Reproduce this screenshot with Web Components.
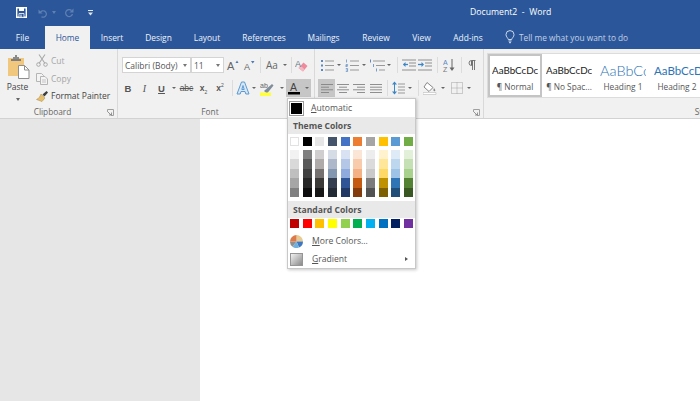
<!DOCTYPE html>
<html>
<head>
<meta charset="utf-8">
<title>Document2 - Word</title>
<style>
html,body{margin:0;padding:0;width:700px;height:401px;overflow:hidden;background:#fff}
</style>
</head>
<body>
<word-app></word-app>
<script>
const FONT = `"Open Sans","Noto Sans",sans-serif`

const ICONS = {
    save:`<svg width="11" height="11" viewBox="0 0 11 11"><path d="M.7 .7h9.600v9.600H.7z" fill="none" stroke="#fff" stroke-width="1.400"/><path d="M3 .7h5v3.300H3z" fill="#fff"/><path d="M3 6.500h5v3.800H3z" fill="#2b579a" stroke="#fff" stroke-width=".8"/><path d="M4.500 7.500h1v2.500h-1z" fill="#fff"/></svg>`,
    undo:`<svg width="10" height="10" viewBox="0 0 10 10"><path d="M2.300 4.500a3.200 3.200 0 1 1 1.200 4.200" fill="none" stroke="#5f80b3" stroke-width="1.200"/><path d="M.5 1.500v4h4z" fill="#5f80b3"/></svg>`,
    redo:`<svg width="10" height="10" viewBox="0 0 10 10"><path d="M7.500 2.500A3.500 3.500 0 1 0 8.500 6" fill="none" stroke="#5f80b3" stroke-width="1.200"/><path d="M9.500 .5v4h-4z" fill="#5f80b3"/></svg>`,
    custom:`<svg width="5" height="6" viewBox="0 0 5 6"><path d="M0 .5h5" stroke="#dfe7f3" stroke-width="1"/><path d="M0 2.500h5l-2.500 3z" fill="#dfe7f3"/></svg>`,
    bulb:`<svg width="10" height="14" viewBox="0 0 10 14"><path d="M3.300 9.500C3 7.800 1 7 1 4.600a4 4 0 0 1 8 0C9 7 7 7.800 6.700 9.500z" fill="none" stroke="#dbe4f1" stroke-width=".9"/><path d="M3.500 11h3M4 12.700h2" stroke="#dbe4f1"/></svg>`,
    paste:`<svg width="22" height="24" viewBox="0 0 22 24"><path d="M0 3h16v18H0z" fill="#f0c77d"/><path d="M5 2h2V0h2v2h2v3H5z" fill="#8a8a8a"/><path d="M3 4h10v2H3z" fill="#7d7d7d"/><path d="M10.500 10.500h6l4.500 4.500v8.500H10.500z" fill="#fff" stroke="#8f8f8f"/><path d="M16.500 10.500v4.500H21" fill="none" stroke="#8f8f8f"/></svg>`,
    cut:`<svg width="12" height="13" viewBox="0 0 12 13"><path d="M3 0.500l6 9M9 0.500l-6 9" stroke="#a9a9a9" stroke-width="1.100" fill="none"/><circle cx="2.500" cy="10.500" r="1.800" fill="none" stroke="#a9a9a9"/><circle cx="9.500" cy="10.500" r="1.800" fill="none" stroke="#a9a9a9"/></svg>`,
    copy:`<svg width="12" height="13" viewBox="0 0 12 13"><path d="M.5 1.500h5l2 2v6h-7z" fill="#f4f4f4" stroke="#b5b5b5"/><path d="M4.500 4.500h4.500l2.500 2.500v5.500h-7z" fill="#f4f4f4" stroke="#b5b5b5"/><path d="M6 8h4M6 10h4" stroke="#c4c4c4"/></svg>`,
    painter:`<svg width="13" height="12" viewBox="0 0 13 12"><path d="M5 4l4 4-3 3.500L.5 9.500C3 8.500 4 6.500 5 4z" fill="#e7be6c" stroke="#a98a4c" stroke-width=".5"/><path d="M6.500 4.500l2 2 3.500-4-1.500-1.500z" fill="#3d3d3d"/></svg>`,
    launcher:`<svg width="7" height="7" viewBox="0 0 7 7"><path d="M.5 3V.5H6.500V6.500H4" fill="none" stroke="#a0a0a0"/><path d="M1 3l3 3M4.500 3.500V6H2" fill="none" stroke="#7e7e7e" stroke-width=".8"/></svg>`,
    grow:`<svg width="14" height="16" viewBox="0 0 14 16"><text x="1" y="13" font-family="Liberation Sans" font-size="11" fill="#666">A</text><path d="M9.500 6l1.500-2.500L12.500 6z" fill="#4a7ab8"/></svg>`,
    shrink:`<svg width="13" height="16" viewBox="0 0 13 16"><text x="1" y="13" font-family="Liberation Sans" font-size="9" fill="#666">A</text><path d="M8 4h3.500L9.750 6.500z" fill="#4a7ab8"/></svg>`,
    eraser:`<svg width="14" height="15" viewBox="0 0 14 15"><path d="M3.500 10L8.500 4.500l4 3.500-4.500 5.500z" fill="#ee8a9c"/><path d="M3.500 10l2-2.300 4 3.500-1.500 2.300z" fill="#f4b8c2"/><text x="0" y="9" font-family="Liberation Sans" font-size="9" fill="#678">A</text></svg>`,
    bullets:`<svg width="14" height="13" viewBox="0 0 14 13"><path d="M1 1h2v2H1zM1 5.500h2v2H1zM1 10h2v2H1z" fill="#5b88c0"/><path d="M5 2h9M5 6.500h9M5 11h9" stroke="#999"/></svg>`,
    numbers:`<svg width="14" height="13" viewBox="0 0 14 13"><path d="M1.500 0.500v3M.8 5.500h1.800v1H.8v1h1.800M.8 9.500h1.800v3H.8M.8 11h1.800" stroke="#5b88c0" stroke-width=".7" fill="none"/><path d="M5 2h9M5 6.500h9M5 11h9" stroke="#999"/></svg>`,
    multi:`<svg width="16" height="13" viewBox="0 0 16 13"><path d="M1.500 0.500v3" stroke="#5b88c0"/><path d="M4.500 5v3M7.500 9.500v3" stroke="#5b88c0" stroke-width=".8"/><path d="M4 2h12M7 6.500h9M10 11h6" stroke="#999"/></svg>`,
    outdent:`<svg width="14" height="12" viewBox="0 0 14 12"><path d="M0 1h14M7 4h7M7 7h7M0 11h14" stroke="#8f8f8f"/><path d="M6 5.500H1.500" stroke="#3d86c6" stroke-width="1.300"/><path d="M3.500 3L1 5.500 3.500 8z" fill="#3d86c6"/></svg>`,
    indent:`<svg width="14" height="12" viewBox="0 0 14 12"><path d="M0 1h14M7 4h7M7 7h7M0 11h14" stroke="#8f8f8f"/><path d="M0 5.500h4.500" stroke="#3d86c6" stroke-width="1.300"/><path d="M3.500 3L6 5.500 3.500 8z" fill="#3d86c6"/></svg>`,
    sort:`<svg width="12" height="15" viewBox="0 0 12 15"><text x="0" y="6.500" font-family="Liberation Sans" font-size="7" fill="#5b88c0">A</text><text x="0" y="13.500" font-family="Liberation Sans" font-size="7" fill="#777">Z</text><path d="M9 1v10" stroke="#666"/><path d="M6.500 9.500L9 13l2.500-3.500z" fill="#666"/></svg>`,
    pilcrow:`<svg width="8" height="10" viewBox="0 0 8 10"><path d="M3.500 5.500a2.500 2.500 0 0 1 0-5H7.500M4.500 .5V10M6.500 .5V10" fill="none" stroke="#6c6c6c" stroke-width=".9"/><path d="M3 .5h1.500v5H3z" fill="#6c6c6c"/></svg>`,
    texteffect:`<svg width="14" height="14" viewBox="0 0 14 14"><path d="M5.500 1h3L13 13H9.800l-.8-2.500H5L4.200 13H1zM5.800 8.500h2.400L7 4.500z" fill="#d8e6f5" stroke="#5b9bd5" stroke-width="1" fill-rule="evenodd"/></svg>`,
    highlight:`<svg width="15" height="15" viewBox="0 0 15 15"><text x="0" y="7" font-family="Liberation Sans" font-size="7" fill="#666">ab</text><path d="M4 10l8-7 1.500 1.500-6.500 8z" fill="#7f8c99"/><path d="M0 11.500h11V15H0z" fill="#ffff3c"/></svg>`,
    fontcolor:`<svg width="14" height="15" viewBox="0 0 14 15"><text x="3" y="10" font-family="Liberation Sans" font-size="10.500" fill="#444">A</text><path d="M1 11h12v2.500H1z" fill="#000"/></svg>`,
    left:`<svg width="12" height="9" viewBox="0 0 12 9"><path d="M0 .5h12M0 3.200h8M0 5.800h12M0 8.500h8" stroke="#8a8a8a"/></svg>`,
    center:`<svg width="12" height="9" viewBox="0 0 12 9"><path d="M0 .5h12M2 3.200h8M0 5.800h12M2 8.500h8" stroke="#8f8f8f"/></svg>`,
    right:`<svg width="12" height="9" viewBox="0 0 12 9"><path d="M0 .5h12M4 3.200h8M0 5.800h12M4 8.500h8" stroke="#8f8f8f"/></svg>`,
    justify:`<svg width="12" height="9" viewBox="0 0 12 9"><path d="M0 .5h12M0 3.200h12M0 5.800h12M0 8.500h12" stroke="#8f8f8f"/></svg>`,
    spacing:`<svg width="13" height="14" viewBox="0 0 13 14"><path d="M2.500 2v10" stroke="#3d86c6"/><path d="M0 3.500L2.500 .5 5 3.500zM0 10.500l2.500 3 2.500-3z" fill="#3d86c6"/><path d="M6 3h7M6 6h7M6 9h7M6 12h7" stroke="#999"/></svg>`,
    shading:`<svg width="15" height="14" viewBox="0 0 15 14"><path d="M4 1.500l6 5-4 4-5-4.500z" fill="#fff" stroke="#888"/><path d="M11 7c1.500 1.800 1.800 2.800.7 3.300-1.300.4-1.700-1.300-.7-3.300z" fill="#888"/><path d="M0 11.500h13v2H0z" fill="#fff" stroke="#bbb" stroke-width=".6"/></svg>`,
    borders:`<svg width="12" height="12" viewBox="0 0 12 12"><path d="M.5 .5h11v11H.5zM6 .5v11M.5 6h11" fill="none" stroke="#a3a3a3" stroke-dasharray="1 1"/></svg>`,
    wheel:`<svg width="13" height="13" viewBox="0 0 13 13"><path d="M6.500 6.500L6.500 0A6.500 6.500 0 0 1 13 6.500z" fill="#e8c98e"/><path d="M6.500 6.500H13A6.500 6.500 0 0 1 9 12.500z" fill="#3f78c0"/><path d="M6.500 6.500L9 12.500A6.500 6.500 0 0 1 2.500 11.800z" fill="#6fb0dc"/><path d="M6.500 6.500L2.500 11.800A6.500 6.500 0 0 1 0 6.500z" fill="#8f8f8f"/><path d="M6.500 6.500H0A6.500 6.500 0 0 1 6.500 0z" fill="#dd7a4a"/></svg>`,
    gradient:`<svg width="13" height="13" viewBox="0 0 13 13"><defs><linearGradient id="g" x1="0" y1="0" x2="1" y2="1"><stop offset="0" stop-color="#f6f6f6"/><stop offset="1" stop-color="#858585"/></linearGradient></defs><rect x=".5" y=".5" width="12" height="12" fill="url(#g)" stroke="#959595"/></svg>`
}

class RIcon extends HTMLElement {
    connectedCallback(){
        this.attachShadow({mode:"open"})
        this.shadowRoot.innerHTML = `<style>:host{display:inline-flex;line-height:0}</style>${ICONS[this.getAttribute("name")] || ""}`
    }
}
customElements.define("r-icon",RIcon)

// one small ribbon button: fixed width, icon or slotted letter in the middle
class RTool extends HTMLElement {
    connectedCallback(){
        const w = this.getAttribute("w") || 16
        const icon = this.getAttribute("icon")
        this.attachShadow({mode:"open"})
        this.shadowRoot.innerHTML = `<style>
        :host{display:flex;align-items:center;justify-content:center;flex:none;width:${w}px;height:18px;color:#555}
        :host([hl]){background:#c6c6c6}
        </style>${icon ? `<r-icon name="${icon}"></r-icon>` : ""}<slot></slot>`
    }
}
customElements.define("r-tool",RTool)

class RCaret extends HTMLElement {
    connectedCallback(){
        const w = this.getAttribute("w") || 8
        this.attachShadow({mode:"open"})
        this.shadowRoot.innerHTML = `<style>
        :host{display:flex;align-items:center;justify-content:center;flex:none;width:${w}px;height:18px}
        i{width:0;height:0;border:2px solid transparent;border-top:2.500px solid #666;border-bottom:0}
        </style><i></i>`
    }
}
customElements.define("r-caret",RCaret)

class RSep extends HTMLElement {
    connectedCallback(){
        const w = this.getAttribute("w") || 8
        this.attachShadow({mode:"open"})
        this.shadowRoot.innerHTML = `<style>
        :host{display:flex;justify-content:center;flex:none;width:${w}px;height:18px}
        i{width:1px;height:16px;margin-top:1px;background:#dcdcdc}
        </style><i></i>`
    }
}
customElements.define("r-sep",RSep)

class RGroup extends HTMLElement {
    connectedCallback(){
        const launcher = this.hasAttribute("launcher")
        this.attachShadow({mode:"open"})
        this.shadowRoot.innerHTML = `<style>
        :host{display:flex;flex-direction:column;flex:none;box-sizing:border-box;height:69px;width:${this.getAttribute("w")}px;border-right:1px solid #d9d9d9;position:relative}
        :host(:last-child){border-right:0}
        .body{flex:1;min-height:0}
        .label{height:13px;display:flex;justify-content:center;align-items:center;font:8.300px ${FONT};color:#666;padding-right:12px}
        .launch{position:absolute;right:3px;bottom:2px;line-height:0}
        </style>
        <div class="body"><slot></slot></div>
        <div class="label">${this.getAttribute("label")}</div>
        ${launcher ? `<div class="launch"><r-icon name="launcher"></r-icon></div>` : ""}`
    }
}
customElements.define("r-group",RGroup)

class WordTitlebar extends HTMLElement {
    connectedCallback(){
        this.attachShadow({mode:"open"})
        this.shadowRoot.innerHTML = `<style>
        :host{display:flex;align-items:center;height:25px;background:#2b579a;color:#fff;font:8.700px ${FONT};position:relative;padding-left:16px}
        .qat{display:flex;align-items:center}
        .title{position:absolute;left:470px;top:6px;white-space:pre}
        i{width:0;height:0;border:2px solid transparent;border-top:3px solid #5f80b3;border-bottom:0;margin:0 8px 0 4px}
        </style>
        <div class="qat">
            <r-icon name="save" style="margin-right:11px"></r-icon>
            <r-icon name="undo"></r-icon><i></i>
            <r-icon name="redo" style="margin-right:14px"></r-icon>
            <r-icon name="custom"></r-icon>
        </div>
        <div class="title">Document2  -  Word</div>`
    }
}
customElements.define("word-titlebar",WordTitlebar)

class WordTabs extends HTMLElement {
    connectedCallback(){
        const tabs = [["File",45],["Home",45,1],["Insert",44],["Design",49],["Layout",48],["References",66],["Mailings",53],["Review",52],["View",39],["Add-ins",54]]
        this.attachShadow({mode:"open"})
        this.shadowRoot.innerHTML = `<style>
        :host{display:flex;height:24px;background:#2b579a;color:#eef3fa;font:8.400px ${FONT}}
        .tab{flex:none;display:flex;align-items:center;justify-content:center;box-sizing:border-box}
        .tab.on{background:#f1f1f1;color:#2b579a;margin-top:1px}
        .tell{display:flex;align-items:center;gap:4px;margin-left:10px;color:#c3d1e6;font-size:8.300px}
        </style>
        ${tabs.map(t => `<div class="tab ${t[2] ? "on" : ""}" style="width:${t[1]}px">${t[0]}</div>`).join("")}
        <div class="tell"><r-icon name="bulb"></r-icon><span>Tell me what you want to do</span></div>`
    }
}
customElements.define("word-tabs",WordTabs)

class StyleGallery extends HTMLElement {
    connectedCallback(){
        const items = [
            ["AaBbCcDc","¶ Normal","#222",9.800,400,1],
            ["AaBbCcDc","¶ No Spac...","#222",9.800,400],
            ["AaBbCc","Heading 1","#2e74b5",14.500,300],
            ["AaBbCcD","Heading 2","#2e74b5",11.500,400]
        ]
        this.attachShadow({mode:"open"})
        this.shadowRoot.innerHTML = `<style>
        :host{display:flex;margin:4px 0 0 3px;height:45px;width:213px;background:#fff;border:1px solid #dcdcdc;border-right:0;box-sizing:border-box;overflow:hidden}
        .it{flex:none;width:54px;box-sizing:border-box;display:flex;flex-direction:column;align-items:center;overflow:hidden;padding-top:5px}
        .it.on{border:2px solid #c4c4c4;padding-top:3px;height:43px}
        .s{height:22px;flex:none;display:flex;align-items:center;white-space:nowrap;font-family:Lato,"Liberation Sans",sans-serif;width:46px;overflow:hidden}
        .n{font:8.300px ${FONT};color:#555;white-space:nowrap}
        </style>
        ${items.map(i => `<div class="it ${i[5] ? "on" : ""}"><div class="s" style="color:${i[2]};font-size:${i[3]}px;font-weight:${i[4]}">${i[0]}</div><div class="n">${i[1]}</div></div>`).join("")}`
    }
}
customElements.define("style-gallery",StyleGallery)

class WordRibbon extends HTMLElement {
    connectedCallback(){
        this.attachShadow({mode:"open"})
        this.shadowRoot.innerHTML = `<style>
        :host{display:flex;height:70px;box-sizing:border-box;background:#f1f1f1;border-bottom:1px solid #d2d2d2;font:8.500px ${FONT};color:#444;overflow:hidden}
        .clip{display:flex;height:100%}
        .paste{flex:none;width:36px;display:flex;flex-direction:column;align-items:center;padding:6px 0 0 2px;box-sizing:border-box}
        .paste span{margin:2px 0 0 -3px;line-height:12px}
        .paste i{margin:5px 0 0 -3px;width:0;height:0;border:2px solid transparent;border-top:3px solid #666;border-bottom:0}
        .small{display:flex;flex-direction:column;padding-top:3px}
        .small div{display:flex;align-items:center;height:17.500px;white-space:nowrap}
        .small r-icon{width:15px}
        .small .off{color:#a6a6a6}
        .row{display:flex;align-items:center;height:18px}
        .row1{margin-top:7px;margin-bottom:5px}
        .pl4{padding-left:4px}
        .pl2{padding-left:2px}
        .sel{flex:none;box-sizing:border-box;height:16px;background:#fff;border:1px solid #d4d4d4;display:flex;align-items:center;justify-content:space-between;padding:0 3px 0 2px;color:#555;white-space:nowrap}
        .sel i{width:0;height:0;border:2px solid transparent;border-top:3px solid #777;border-bottom:0}
        .b{font:bold 9.500px "Liberation Sans",sans-serif}
        .it{font:italic 10px "Liberation Serif",serif}
        .u{font:bold 9.500px "Liberation Sans",sans-serif;text-decoration:underline}
        .sm{font:8.500px "Liberation Sans",sans-serif;white-space:nowrap}
        .sm sub,.sm sup{font-size:5px;line-height:0}
        .st{text-decoration:line-through}
        .aa{font-size:10px;color:#666}
        .fc{display:flex;background:#c6c6c6;flex:none}
        </style>
        <r-group w="118" label="Clipboard" launcher>
            <div class="clip">
                <div class="paste">
                    <r-icon name="paste"></r-icon>
                    <span>Paste</span>
                    <i></i>
                </div>
                <div class="small">
                    <div class="off"><r-icon name="cut"></r-icon>Cut</div>
                    <div class="off"><r-icon name="copy"></r-icon>Copy</div>
                    <div><r-icon name="painter"></r-icon>Format Painter</div>
                </div>
            </div>
        </r-group>
        <r-group w="197" label="Font">
            <div class="row row1 pl4">
                <div class="sel" style="width:69px">Calibri (Body)<i></i></div>
                <div class="sel" style="width:33px">11<i></i></div>
                <r-tool w="17" icon="grow"></r-tool>
                <r-tool w="16" icon="shrink"></r-tool>
                <r-sep w="6"></r-sep>
                <r-tool w="18"><span class="aa">Aa</span></r-tool>
                <r-caret w="7"></r-caret>
                <r-sep w="6"></r-sep>
                <r-tool w="15" icon="eraser"></r-tool>
            </div>
            <div class="row pl2">
                <r-tool w="16"><span class="b">B</span></r-tool>
                <r-tool w="17"><span class="it">I</span></r-tool>
                <r-tool w="17"><span class="u">U</span></r-tool>
                <r-caret w="8"></r-caret>
                <r-tool w="17"><span class="sm st">abc</span></r-tool>
                <r-tool w="17"><span class="sm"><b>x</b><sub>2</sub></span></r-tool>
                <r-tool w="16"><span class="sm"><b>x</b><sup>2</sup></span></r-tool>
                <r-sep w="8"></r-sep>
                <r-tool w="14" icon="texteffect"></r-tool>
                <r-caret w="8"></r-caret>
                <r-tool w="19" icon="highlight"></r-tool>
                <r-caret w="9"></r-caret>
                <div class="fc"><r-tool w="16" icon="fontcolor"></r-tool><r-caret w="9"></r-caret></div>
            </div>
        </r-group>
        <r-group w="169" label="" launcher>
            <div class="row row1 pl4">
                <r-tool w="16" icon="bullets"></r-tool><r-caret></r-caret>
                <r-tool w="17" icon="numbers"></r-tool><r-caret></r-caret>
                <r-tool w="17" icon="multi"></r-tool><r-caret></r-caret>
                <r-sep w="8"></r-sep>
                <r-tool w="16" icon="outdent"></r-tool>
                <r-tool w="16" icon="indent"></r-tool>
                <r-sep w="8"></r-sep>
                <r-tool w="16" icon="sort"></r-tool>
                <r-sep w="9"></r-sep>
                <r-tool w="12" icon="pilcrow"></r-tool>
            </div>
            <div class="row" style="padding-left:3px">
                <r-tool w="17" icon="left" hl></r-tool>
                <r-tool w="16" icon="center"></r-tool>
                <r-tool w="16" icon="right"></r-tool>
                <r-tool w="17" icon="justify"></r-tool>
                <r-sep w="7"></r-sep>
                <r-tool w="14" icon="spacing"></r-tool>
                <r-caret w="9"></r-caret>
                <r-sep w="9"></r-sep>
                <r-tool w="15" icon="shading"></r-tool>
                <r-caret w="9"></r-caret>
                <r-tool w="16" icon="borders" style="margin-left:2px"></r-tool>
                <r-caret w="8"></r-caret>
            </div>
        </r-group>
        <r-group w="456" label="Styles">
            <style-gallery></style-gallery>
        </r-group>`
    }
}
customElements.define("word-ribbon",WordRibbon)

class ColorMenu extends HTMLElement {
    connectedCallback(){
        const base = ["FFFFFF","000000","E7E6E6","44546A","4472C4","ED7D31","A5A5A5","FFC000","5B9BD5","70AD47"]
        const shades = [
            ["F2F2F2","D9D9D9","BFBFBF","A6A6A6","808080"],
            ["7F7F7F","595959","404040","262626","0D0D0D"],
            ["D0CECE","AFABAB","767171","3B3838","181717"],
            ["D6DCE5","ADB9CA","8497B0","333F50","222A35"],
            ["D9E2F3","B4C7E7","8FAADC","2F5597","1F3864"],
            ["FBE5D6","F8CBAD","F4B183","C55A11","843C0C"],
            ["EDEDED","DBDBDB","C9C9C9","7B7B7B","525252"],
            ["FFF2CC","FFE699","FFD966","BF9000","7F6000"],
            ["DEEBF7","BDD7EE","9DC3E6","2E75B6","1F4E79"],
            ["E2F0D9","C5E0B4","A9D18E","548235","385723"]
        ]
        const standard = ["C00000","FF0000","FFC000","FFFF00","92D050","00B050","00B0F0","0070C0","002060","7030A0"]
        this.attachShadow({mode:"open"})
        this.shadowRoot.innerHTML = `<style>
        :host{display:block;position:absolute;left:287px;top:98px;width:129px;height:171px;box-sizing:border-box;background:#fff;border:1px solid #c8c8c8;box-shadow:1px 1px 3px rgba(0,0,0,.22);font:8.600px ${FONT};color:#555}
        .item{display:flex;align-items:center;height:18px;padding-left:2px;position:relative}
        .item.auto{padding-left:1px}
        .item .ic{width:22px;display:flex;line-height:0}
        u{text-underline-offset:1px}
        .swatch{width:15px;height:15px;box-sizing:border-box;background:#000;background-clip:content-box;padding:1px;border:1px solid #9a9a9a;margin-right:7px;flex:none}
        .head{height:17px;background:#e9e9e9;display:flex;align-items:center;padding-left:5px;font-weight:700;color:#555}
        .grid{display:grid;grid-template-columns:repeat(10,9px);justify-content:space-between;padding:0 2px}
        .grid span{display:block;height:9px}
        .grid .w{box-shadow:inset 0 0 0 1px #e2e2e2}
        .shades{margin-top:4px;grid-auto-flow:column;grid-template-rows:repeat(5,9.500px)}
        .shades span{height:9.500px}
        .theme{margin-top:3px}
        .theme span{height:8.500px}
        .std{margin-top:1px;margin-bottom:4px}
        .arrow{position:absolute;right:7px;top:7px;width:0;height:0;border:2.500px solid transparent;border-left:3.500px solid #555;border-right:0}
        </style>
        <div class="item auto"><div class="swatch"></div><span><u>A</u>utomatic</span></div>
        <div class="head">Theme Colors</div>
        <div class="grid theme">${base.map(c => `<span class="${c == "FFFFFF" ? "w" : ""}" style="background:#${c}"></span>`).join("")}</div>
        <div class="grid shades">${shades.map(col => col.map(c => `<span style="background:#${c}"></span>`).join("")).join("")}</div>
        <div class="head" style="margin-top:4px">Standard Colors</div>
        <div class="grid std">${standard.map(c => `<span style="background:#${c}"></span>`).join("")}</div>
        <div class="item"><div class="ic"><r-icon name="wheel"></r-icon></div><span><u>M</u>ore Colors...</span></div>
        <div class="item"><div class="ic"><r-icon name="gradient"></r-icon></div><span><u>G</u>radient</span><i class="arrow"></i></div>`
    }
}
customElements.define("color-menu",ColorMenu)

class WordApp extends HTMLElement {
    connectedCallback(){
        this.attachShadow({mode:"open"})
        this.shadowRoot.innerHTML = `<style>
        :host{display:flex;flex-direction:column;width:700px;height:401px;position:relative;overflow:hidden}
        .work{flex:1;display:flex;min-height:0}
        .side{flex:none;width:200px;background:#e6e6e6}
        .page{flex:1;background:#fff}
        </style>
        <word-titlebar></word-titlebar>
        <word-tabs></word-tabs>
        <word-ribbon></word-ribbon>
        <div class="work"><div class="side"></div><div class="page"></div></div>
        <color-menu></color-menu>`
    }
}
customElements.define("word-app",WordApp)
</script>
</body>
</html>
